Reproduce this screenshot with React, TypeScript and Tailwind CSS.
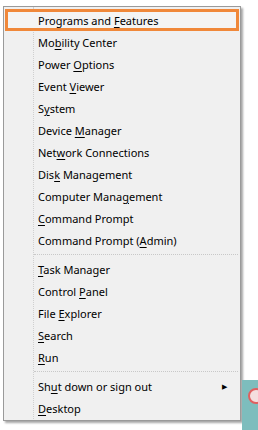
import React from "react";

type Entry = { label: string; sep?: false; arrow?: boolean } | { sep: true };

// "&" marks the access key that gets underlined
const entries: Entry[] = [
  { label: "Programs and &Features" },
  { label: "Mo&bility Center" },
  { label: "Power &Options" },
  { label: "Event &Viewer" },
  { label: "S&ystem" },
  { label: "Device &Manager" },
  { label: "Net&work Connections" },
  { label: "Dis&k Management" },
  { label: "Computer Mana&gement" },
  { label: "&Command Prompt" },
  { label: "Command Prompt (&Admin)" },
  { sep: true },
  { label: "&Task Manager" },
  { label: "Control &Panel" },
  { label: "File &Explorer" },
  { label: "&Search" },
  { label: "&Run" },
  { sep: true },
  { label: "Sh&ut down or sign out", arrow: true },
  { label: "&Desktop" },
];

const Label = ({ text }: { text: string }) => {
  const i = text.indexOf("&");
  return (
    <span className="whitespace-pre">
      {text.slice(0, i)}
      <u className="underline underline-offset-[2px] decoration-[1px]">{text[i + 1]}</u>
      {text.slice(i + 2)}
    </span>
  );
};

const App = () => {
  return (
    <div className="flex h-[430px] w-[258px] bg-white font-['Noto_Sans',sans-serif] text-[11px] text-black">
      {/* Menu */}
      <div className="ml-[3px] mt-[6px] h-[415px] w-[238px] border border-[#9a9a9a] bg-[#f0f0f0] shadow-[2px_2px_2px_rgba(0,0,0,0.35)]">
        <div className="relative pt-[2px]">
          {/* gutter line */}
          <div className="absolute bottom-0 left-[29px] top-0 border-l border-dotted border-[#cfcfcf]" />
          {entries.map((e, idx) =>
            e.sep ? (
              <div key={idx} className="ml-[30px] mr-[2px] flex h-[7px] items-center">
                <div className="w-full border-t border-dotted border-[#c8c8c8]" />
              </div>
            ) : idx === 0 ? (
              <div
                key={idx}
                className="relative mx-[1px] flex h-[22px] items-center border-[3px] border-[#f0883a] bg-[#f4f4f4] pl-[30px] leading-none"
              >
                <Label text={e.label} />
              </div>
            ) : (
              <div key={idx} className="relative flex h-[22px] items-center pl-[34px] pr-[13px] leading-none">
                <span className="flex-1">
                  <Label text={e.label} />
                </span>
                {e.arrow && <span className="text-[7px] leading-none">▶</span>}
              </div>
            )
          )}
        </div>
      </div>
      {/* Right side: desktop behind the menu */}
      <div className="ml-[1px] flex flex-1 flex-col">
        <div className="h-[380px]" />
        <div className="relative flex-1 bg-[#7dbdbd]">
          <div className="absolute left-[6px] top-[8px] h-[16px] w-[16px] rounded-full border-2 border-[#e06060] bg-[#f4dede]" />
        </div>
      </div>
    </div>
  );
};

export default App;
